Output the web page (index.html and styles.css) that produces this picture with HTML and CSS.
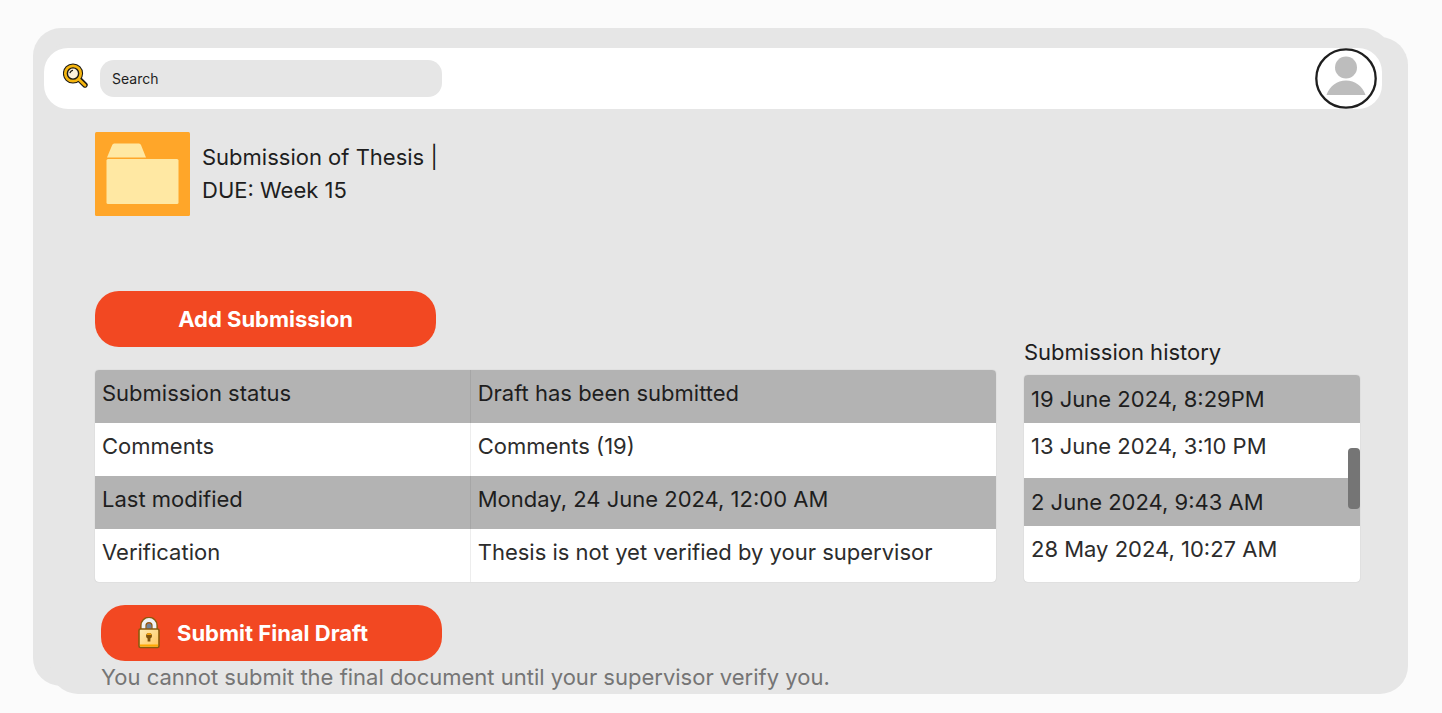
FILE: index.html
```html
<!DOCTYPE html>
<html lang="en">
<head>
<meta charset="utf-8">
<meta name="viewport" content="width=device-width, initial-scale=1">
<title>Submission of Thesis</title>
<link rel="stylesheet" href="styles.css">
</head>
<body>
<div class="card">
  <header class="topbar">
    <label class="search-icon" for="search" aria-label="Search">
      <svg width="26" height="26" viewBox="0 0 26 26">
        <path d="M17 17l5 5" stroke="#1c1a16" stroke-width="5.400" stroke-linecap="round"/>
        <circle cx="10" cy="10.500" r="7.500" fill="#fdf1dc" stroke="#1c1a16" stroke-width="5.200"/>
        <path d="M16 16.500l6 5.700" stroke="#f5b50f" stroke-width="2.800" stroke-linecap="round"/>
        <circle cx="10" cy="10.500" r="7.700" fill="none" stroke="#f5b50f" stroke-width="2.700"/>
        <path d="M7 9.700a4 4 0 0 1 2.500-2.300" fill="none" stroke="#1c1a16" stroke-width="1.200" stroke-linecap="round"/>
      </svg>
    </label>
    <input class="search" id="search" type="search" placeholder="Search">
    <button class="avatar" type="button" aria-label="Profile">
      <svg width="62" height="61" viewBox="0 0 62 61">
        <ellipse cx="31" cy="30.500" rx="29.700" ry="29.200" fill="#fff" stroke="#1e1e1e" stroke-width="2.300"/>
        <circle cx="31" cy="19.500" r="11" fill="#bdbdbd"/>
        <path d="M11.500 47C14.500 38 22 32.500 31 32.500s16.500 5.500 19.500 14.500z" fill="#bdbdbd"/>
      </svg>
    </button>
  </header>

  <main class="content">
    <div class="assignment">
      <svg class="folder" width="95" height="84" viewBox="0 0 95 84" aria-hidden="true">
        <rect width="95" height="84" rx="1.500" fill="#ffa629"/>
        <path d="M12 25.500L17.200 13q.6-1.500 2-1.500H44q1.400 0 2 1.500l5 12.500z" fill="#ffe8a3"/>
        <rect x="11.500" y="27" width="72" height="45" rx="1.500" fill="#ffe8a3"/>
      </svg>
      <h1 class="title">Submission of Thesis |<br>DUE: Week 15</h1>
    </div>

    <div class="panels">
      <section class="details">
        <button class="action" type="button">Add Submission</button>
        <table class="table">
          <colgroup><col class="col-label"><col></colgroup>
          <tbody>
            <tr><th scope="row">Submission status</th><td>Draft has been submitted</td></tr>
            <tr><th scope="row">Comments</th><td>Comments (19)</td></tr>
            <tr><th scope="row">Last modified</th><td>Monday, 24 June 2024, 12:00 AM</td></tr>
            <tr><th scope="row">Verification</th><td>Thesis is not yet verified by your supervisor</td></tr>
          </tbody>
        </table>
      </section>

      <section class="history">
        <h2 class="title">Submission history</h2>
        <div class="history-list">
          <table class="table">
            <tbody>
              <tr><td>19 June 2024, 8:29PM</td></tr>
              <tr><td>13 June 2024, 3:10 PM</td></tr>
              <tr><td>2 June 2024, 9:43 AM</td></tr>
              <tr><td>28 May 2024, 10:27 AM</td></tr>
            </tbody>
          </table>
          <span class="scroll-thumb"></span>
        </div>
      </section>
    </div>

    <footer class="final">
      <button class="action action-locked" type="button">
        <svg width="24" height="32" viewBox="0 0 24 32" aria-hidden="true">
          <defs>
            <linearGradient id="lock-body" x1="0" y1="0" x2="1" y2="1">
              <stop offset="0" stop-color="#ffedb5"/><stop offset="1" stop-color="#ffc45c"/>
            </linearGradient>
          </defs>
          <path d="M6.500 13V8.500a5.500 5.500 0 0 1 11 0V13" fill="none" stroke="#8a5a0c" stroke-width="6.600"/>
          <path d="M9.500 12V9a2.500 2.500 0 0 1 5 0v3z" fill="#708398"/>
          <path d="M6.500 14V8.500a5.500 5.500 0 0 1 11 0V14" fill="none" stroke="#eef1f4" stroke-width="3.800"/>
          <rect x="2" y="12" width="20" height="18.500" rx="1.500" fill="url(#lock-body)" stroke="#8a5a0c" stroke-width="1.600"/>
          <path d="M3 27.500h18v2H3z" fill="#ffa800"/>
          <path d="M9 19a3 3 0 0 1 6 0q0 1.700-1.600 2.400v3.100h-2.800v-3.100Q9 20.700 9 19z" fill="#80530b"/>
          <path d="M9.300 18a2.800 2.800 0 0 1 5.400 0z" fill="#f4a20a"/>
        </svg>
        <span>Submit Final Draft</span>
      </button>
      <p class="note">You cannot submit the final document until your supervisor verify you.</p>
    </footer>
  </main>
</div>
</body>
</html>
```
FILE: styles.css
```css
* { box-sizing: border-box; }

body {
  margin: 0;
  padding: 28px 34px 19px 33px;
  background: #fbfbfb;
  color: #1e1e1e;
  font: 400 22px/33px Inter, "Liberation Sans", sans-serif;
}

.card {
  position: relative;
  isolation: isolate;
  padding-top: 20px;
}

/* Two offset sheets form the stacked card outline. */
.card::before,
.card::after {
  content: "";
  position: absolute;
  z-index: -1;
  border-radius: 28px;
  background: #e6e6e6;
}
.card::before { inset: 0 17px 8px 0; }
.card::after { inset: 9px 0 0 17px; }

.topbar {
  display: flex;
  align-items: center;
  height: 61px;
  margin: 0 26px 0 11px;
  padding: 0 5px 0 19px;
  border-radius: 24px;
  background: #fff;
}

.search-icon {
  height: 32px;
  margin-right: 11px;
}
.search-icon svg { display: block; }

.search {
  width: 342px;
  height: 37px;
  padding: 0 12px;
  border: 0;
  border-radius: 14px;
  background: #e6e6e6;
  color: #1e1e1e;
  font: 400 14px/20px Inter, "Liberation Sans", sans-serif;
}
.search::placeholder { color: #1e1e1e; opacity: 1; }

.avatar {
  margin-left: auto;
  padding: 0;
  border: 0;
  border-radius: 50%;
  background: none;
}
.avatar svg { display: block; }

.content { padding: 23px 48px 0 62px; }

.assignment {
  display: flex;
  align-items: center;
  gap: 12px;
  margin-bottom: 75px;
}
.folder { display: block; }

.title {
  margin: 0;
  font-size: 22px;
  line-height: 33px;
  font-weight: 400;
}

.panels {
  display: grid;
  grid-template-columns: minmax(0, 901fr) minmax(0, 336fr);
  align-items: end;
  gap: 28px;
}

.action {
  display: flex;
  align-items: center;
  justify-content: center;
  width: 341px;
  height: 56px;
  border: 0;
  border-radius: 24px;
  background: #f24822;
  color: #fff;
  font: 700 22px/33px Inter, "Liberation Sans", sans-serif;
}

.details .action { margin-bottom: 23px; }

.table {
  width: 100%;
  border-radius: 4px;
  border-spacing: 0;
  overflow: hidden;
  table-layout: fixed;
  background: #fff;
  box-shadow: 0 0 1px rgba(0, 0, 0, 0.25);
}
.col-label { width: 41.7%; }
.table th,
.table td {
  padding: 7px 7px 13px;
  text-align: left;
  font-weight: 400;
}
.table th { border-right: 1px solid rgba(0, 0, 0, 0.07); }
.table tr:nth-child(odd) { background: #b3b3b3; }
.table tr:nth-child(even) { color: #2c2c2c; }

.history-list {
  position: relative;
  margin-top: 6px;
}
.history .table td { padding: 8px 7px 7px; }
.history .table tr:nth-child(even) td { padding: 7px 7px 15px; }
.history .table tr:last-child td { padding-bottom: 16px; }

.scroll-thumb {
  position: absolute;
  top: 73px;
  right: 0;
  width: 12px;
  height: 61px;
  border-radius: 4px;
  background: #757575;
}

.final { padding: 23px 0 0 6px; }
.action-locked {
  justify-content: flex-start;
  gap: 16px;
  padding: 0 36px;
}

.note {
  margin: 0;
  color: #757575;
}
```
